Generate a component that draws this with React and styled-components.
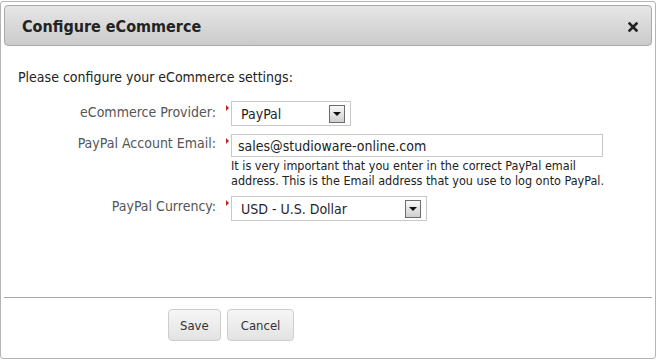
import React from "react";
import styled, { createGlobalStyle } from "styled-components";

const Global = createGlobalStyle`
	html, body {
		margin: 0;
		padding: 0;
		background: #fff;
	}
	body {
		font-family: "DejaVu Sans Condensed", "DejaVu Sans", sans-serif;
	}
`;

const Page = styled.div`
	width: 658px;
	height: 360px;
	padding-top: 1px;
	box-sizing: border-box;
`;

const Dialog = styled.div`
	width: 656px;
	height: 358px;
	box-sizing: border-box;
	border: 1px solid #b4b4b4;
	border-radius: 3px;
	padding: 3px;
	display: flex;
	flex-direction: column;
	background: #fff;
`;

const TitleBar = styled.div`
	height: 41px;
	flex-shrink: 0;
	box-sizing: border-box;
	border: 1px solid #aaa;
	border-radius: 4px;
	background: linear-gradient(#e6e6e6, #cbcbcb);
	display: flex;
	align-items: center;
	justify-content: space-between;
	padding: 2px 13px 0 17px;
`;

const Title = styled.h2`
	margin: 0;
	font-size: 16px;
	font-weight: bold;
	color: #222;
`;

const Close = styled.button`
	border: 0;
	background: none;
	padding: 0;
	width: 10px;
	height: 10px;
	display: flex;
	cursor: pointer;
`;

const Body = styled.div`
	flex: 1;
	padding: 23px 0 0 14px;
`;

const Intro = styled.p`
	margin: 0 0 16px;
	font-size: 14px;
	line-height: 16px;
	color: #222;
`;

const Form = styled.div`
	display: grid;
	grid-template-columns: 198px auto;
	column-gap: 15px;
	row-gap: 8px;
	align-items: start;
`;

const Label = styled.label`
	text-align: right;
	font-size: 14px;
	line-height: 16px;
	color: #555;
	padding-top: ${(p) => p.$top || 3}px;
`;

const Field = styled.div`
	position: relative;

	&::before {
		content: "";
		position: absolute;
		left: -5px;
		top: 4px;
		border-left: 3px solid #b8261f;
		border-top: 3px solid transparent;
		border-bottom: 3px solid transparent;
	}
`;

const Select = styled.div`
	width: ${(p) => p.$width}px;
	height: 25px;
	box-sizing: border-box;
	border: 1px solid #c8c8c8;
	display: flex;
	align-items: center;
	justify-content: space-between;
	padding: 0 5px 0 9px;
	font-size: 14px;
	color: #1f1f2a;
	background: #fff;
`;

const ArrowBox = styled.span`
	width: 16px;
	height: 18px;
	box-sizing: border-box;
	border: 1px solid #6c6c6c;
	background: linear-gradient(#f8f8f8, #cfcfcf);
	display: flex;
	align-items: center;
	justify-content: center;

	&::after {
		content: "";
		border-top: 4px solid #111;
		border-left: 4px solid transparent;
		border-right: 4px solid transparent;
	}
`;

const Input = styled.input`
	display: block;
	width: 372px;
	height: 23px;
	box-sizing: border-box;
	border: 1px solid #c8c8c8;
	padding: 0 6px;
	font-family: inherit;
	font-size: 14px;
	color: #222;
	outline: none;
`;

const Help = styled.div`
	font-size: 12.5px;
	line-height: 15px;
	color: #222;
	margin-top: 1px;
`;

const Footer = styled.div`
	flex-shrink: 0;
	box-sizing: border-box;
	border-top: 1px solid #aaa;
	padding: 11px 0 0 164px;
	height: 58px;
	display: flex;
	gap: 6px;
	align-items: flex-start;
`;

const Button = styled.button`
	height: 32px;
	padding: 0 ${(p) => p.$pad || 12}px;
	border: 1px solid #cdcdcd;
	border-radius: 4px;
	background: linear-gradient(#f6f6f6, #e3e3e3);
	font-family: "DejaVu Sans Condensed", "DejaVu Sans", sans-serif;
	font-size: 13px;
	color: #333;
	cursor: pointer;
`;

const Dropdown = ({ value, width }) => (
	<Select $width={width}>
		<span>{value}</span>
		<ArrowBox />
	</Select>
);

export default function App() {
	return (
		<Page>
			<Global />
			<Dialog>
				<TitleBar>
					<Title>Configure eCommerce</Title>
					<Close aria-label="close">
						<svg width="10" height="10" viewBox="0 0 10 10">
							<path d="M1.5 1.5 L8.5 8.5 M8.5 1.5 L1.5 8.5" stroke="#222" strokeWidth="2.6" strokeLinecap="square" />
						</svg>
					</Close>
				</TitleBar>
				<Body>
					<Intro>Please configure your eCommerce settings:</Intro>
					<Form>
						<Label $top={3}>eCommerce Provider:</Label>
						<Field>
							<Dropdown value="PayPal" width={120} />
						</Field>
						<Label $top={1}>PayPal Account Email:</Label>
						<Field>
							<Input defaultValue="sales@studioware-online.com" />
							<Help>
								It is very important that you enter in the correct PayPal email
								<br />
								address. This is the Email address that you use to log onto PayPal.
							</Help>
						</Field>
						<Label $top={2}>PayPal Currency:</Label>
						<Field>
							<Dropdown value="USD - U.S. Dollar" width={196} />
						</Field>
					</Form>
				</Body>
				<Footer>
					<Button $pad={11}>Save</Button>
					<Button $pad={13}>Cancel</Button>
				</Footer>
			</Dialog>
		</Page>
	);
}
